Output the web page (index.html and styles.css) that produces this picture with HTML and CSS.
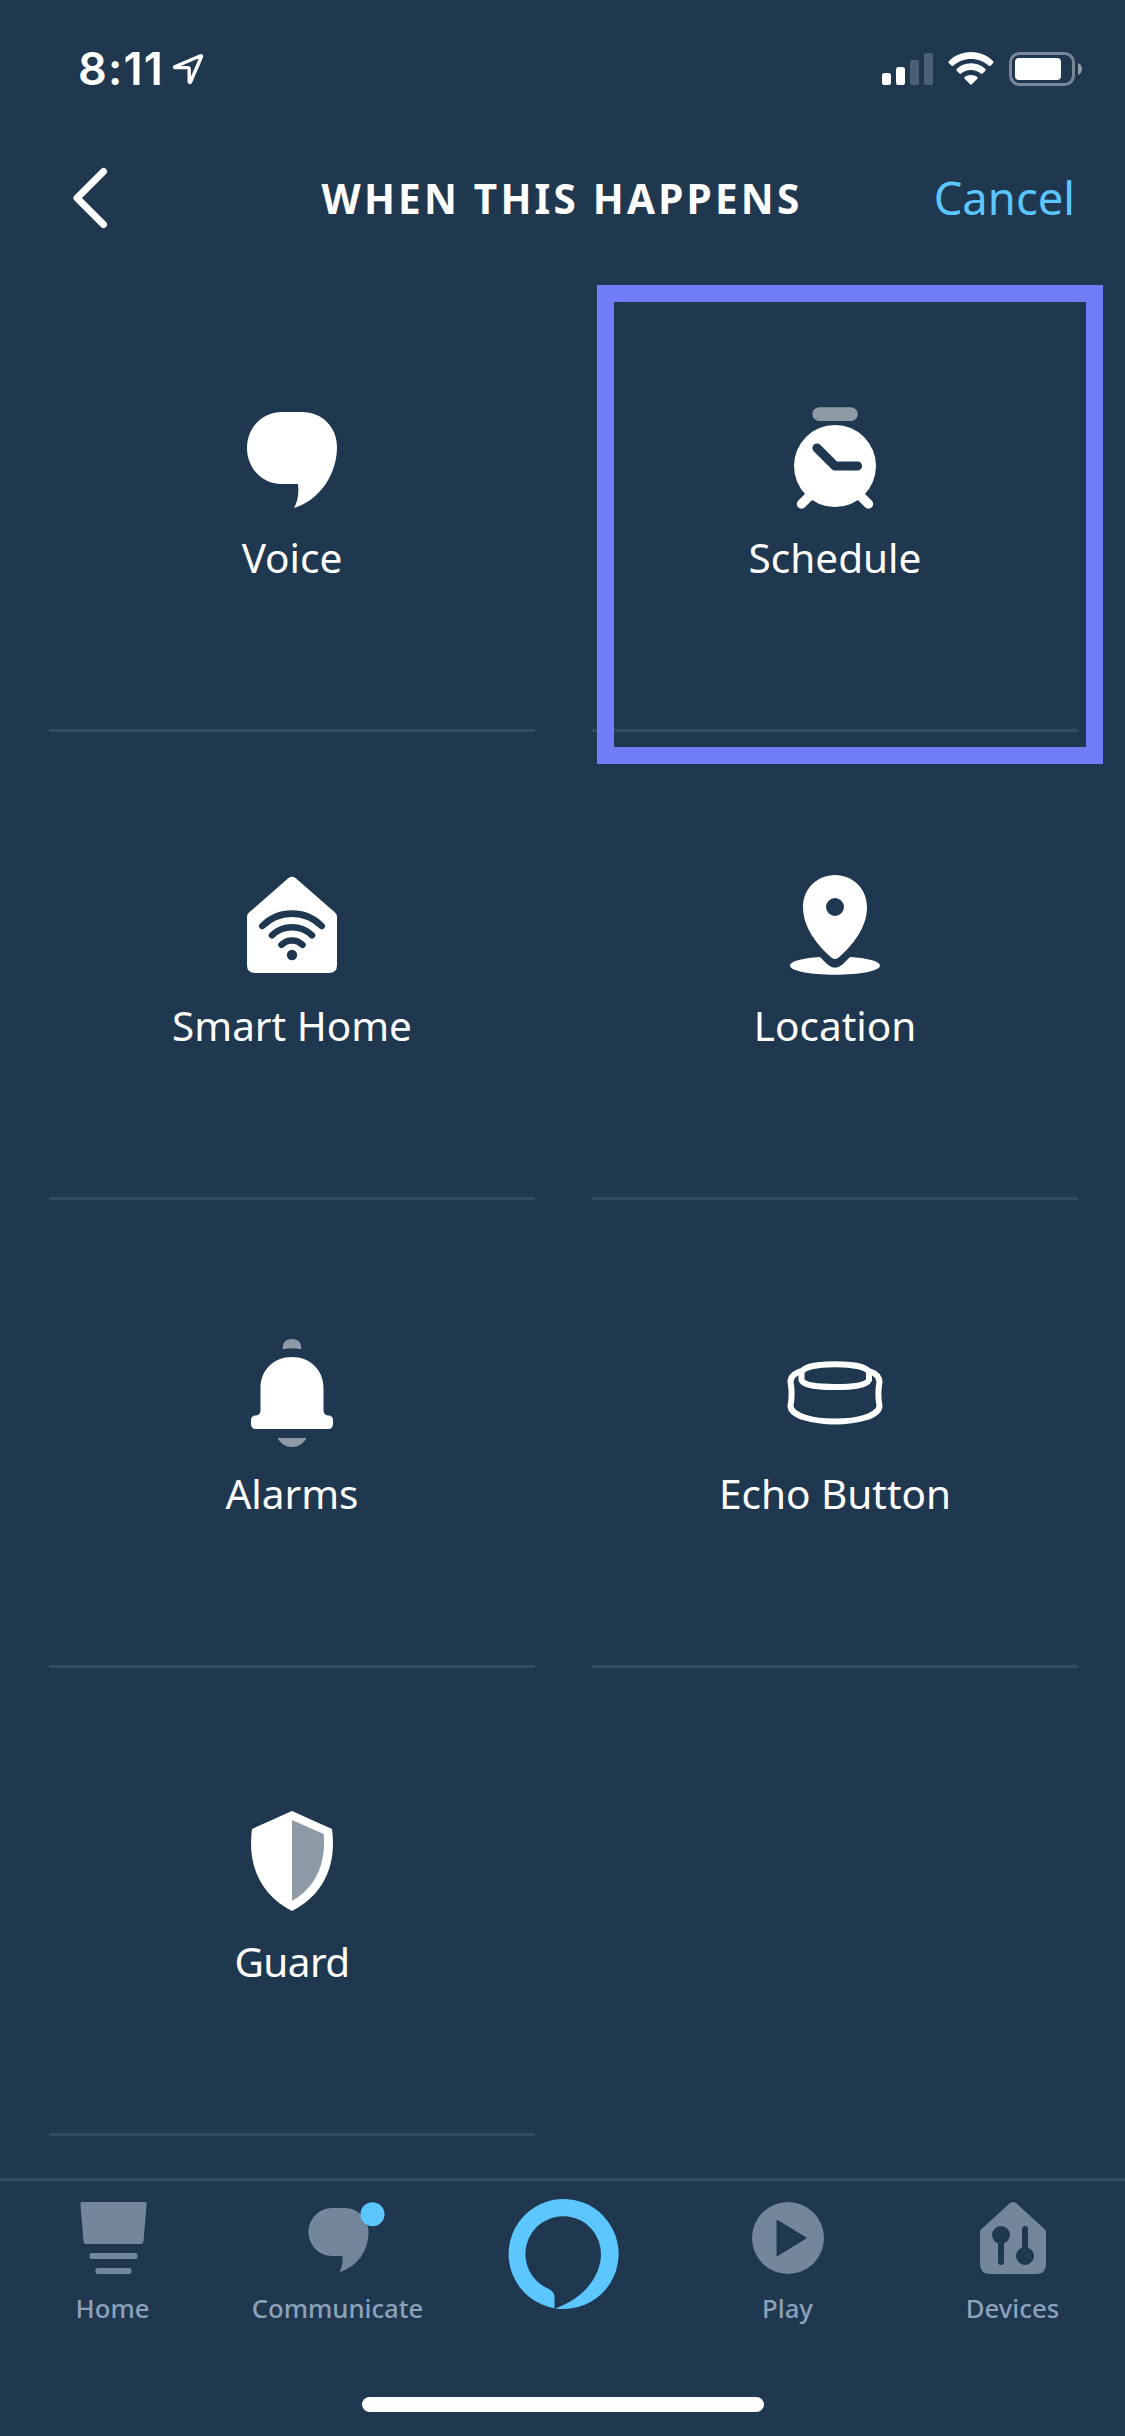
FILE: index.html
```html
<!DOCTYPE html>
<html lang="en">
<head>
<meta charset="utf-8">
<title>When This Happens</title>
<link rel="stylesheet" href="styles.css">
</head>
<body>
<div class="screen">
  <div class="status">
    <div class="status-left">
      <span class="time">8:11</span>
      <svg class="arrow" width="32" height="32" viewBox="0 0 32 32"><path d="M2.8 13.8 28.6 2.8Q29.8 2.4 29.4 3.8L18.4 29.2Q17.4 30 17.2 28.6V15.6Q17 14.6 16 14.6H3.2Q2 14.4 2.8 13.8Z" fill="none" stroke="#fff" stroke-width="3.4" stroke-linejoin="round"/></svg>
    </div>
    <div class="status-right">
      <svg class="signal" width="51" height="33" viewBox="0 0 51 33"><g fill="#fff"><rect y="21" width="9" height="12" rx="2.6"/><rect x="14" y="15" width="9" height="18" rx="2.6"/><g opacity=".2"><rect x="28" y="8" width="9" height="25" rx="2.6"/><rect x="42" y="1" width="9" height="32" rx="2.6"/></g></g></svg>
      <svg class="wifi" width="46" height="34" viewBox="0 0 46 34"><g fill="#fff"><path d="M23 0C31.800 0 39.600 3.500 45.200 9.200Q46 10 45.200 10.900L42.500 13.700Q41.700 14.500 40.800 13.700C36 9.500 29.800 7 23 7S10 9.500 5.200 13.700Q4.300 14.500 3.500 13.700L.8 10.900Q0 10 .8 9.200C6.400 3.500 14.200 0 23 0Z"/><path d="M23 11.200C28.700 11.200 33.700 13.400 37.300 16.900Q38.200 17.800 37.300 18.700L34.500 21.500Q33.700 22.300 32.800 21.500C30.200 19.300 26.800 18 23 18S15.800 19.300 13.200 21.500Q12.300 22.300 11.500 21.500L8.700 18.700Q7.800 17.800 8.700 16.900C12.300 13.400 17.300 11.200 23 11.200Z"/><path d="M23 23C25.600 23 27.700 23.900 29.300 25.100Q30.200 25.900 29.300 26.800L23.900 32.300Q23 33.100 22.100 32.300L16.700 26.800Q15.800 25.900 16.700 25.100C18.300 23.900 20.400 23 23 23Z"/></g></svg>
      <svg class="battery" width="73" height="34" viewBox="0 0 73 34"><rect x="1.500" y="1.500" width="63" height="31" rx="9" fill="none" stroke="#fff" stroke-opacity=".4" stroke-width="3"/><rect x="6" y="6" width="46" height="22" rx="4" fill="#fff"/><path d="M69 11C71.500 12 73 14.200 73 17S71.500 22 69 23Z" fill="#fff" fill-opacity=".5"/></svg>
    </div>
  </div>

  <header class="header">
    <svg class="back" width="36" height="62" viewBox="0 0 36 62"><path d="M31.500 4.500 5 31 31.500 57.500" fill="none" stroke="#fff" stroke-width="7" stroke-linecap="round" stroke-linejoin="round"/></svg>
    <h1 class="title">WHEN THIS HAPPENS</h1>
    <span class="cancel">Cancel</span>
  </header>

  <main class="grid">
    <div class="cell">
      <svg class="icon" viewBox="0 0 108 108"><path d="M44 8H64C84 8 99 23 99 43C99 70 82 96 56 104C60 97 61 89 60 80H44C24 80 9 64 9 44S24 8 44 8Z" fill="#fff"/></svg>
      <span class="label">Voice</span>
    </div>
    <div class="cell">
      <svg class="icon" viewBox="0 0 108 108"><rect x="31.300" y="3.200" width="45.500" height="13.800" rx="6.900" fill="#8e9ba7"/><path d="M29 91.500 20.500 100M79 91.500 87.500 100" stroke="#fff" stroke-width="9.500" stroke-linecap="round"/><circle cx="54" cy="62" r="41" fill="#fff"/><path d="M36 44 54 62H76.500" fill="none" stroke="#1f3850" stroke-width="9.200" stroke-linecap="round" stroke-linejoin="round"/></svg>
      <span class="label">Schedule</span>
      <div class="highlight"></div>
    </div>
    <div class="cell">
      <svg class="icon" viewBox="0 0 108 108"><path d="M50.500 6Q54 3.600 57.500 6L97 40.500Q99 42.500 99 45V93Q99 101 91 101H17Q9 101 9 93V45Q9 42.500 11 40.500Z" fill="#fff"/><g fill="none" stroke="#1f3850" stroke-width="6.600" stroke-linecap="round"><path d="M24.300 54C41 37.500 67 37.500 83.700 54"/><path d="M34 63.300C45 52.500 63 52.500 74 63.300"/><path d="M43.500 72.800C49.500 67 58.500 67 64.500 72.800"/></g><circle cx="54" cy="83" r="5.200" fill="#1f3850"/></svg>
      <span class="label">Smart Home</span>
    </div>
    <div class="cell">
      <svg class="icon" viewBox="0 0 108 108"><path fill-rule="evenodd" d="M54 3C72 3 86 17 86 35C86 56 71 74 57 86Q54 88 51 86C37 74 22 56 22 35C22 17 36 3 54 3ZM54 26A9 9 0 1 0 54 44A9 9 0 1 0 54 26Z" fill="#fff"/><path d="M39 85L46.500 92.500Q54 99 61.500 92.500L69 85C85 86 99 89 99 93.500C99 99 79 102.700 54 102.700S9 99 9 93.500C9 89 23 86 39 85Z" fill="#fff"/></svg>
      <span class="label">Location</span>
    </div>
    <div class="cell">
      <svg class="icon" viewBox="0 0 108 108"><path d="M45 9.300C44 3 48-1 54-1S64 3 63 9.300Q54 7 45 9.300Z" fill="#8e9ba7"/><path d="M22.500 48C22.500 30 36 17 54 17S85.500 30 85.500 48V71Q86 75.500 91 75.500Q95 76 95 80V84Q95 89 90 89H18Q13 89 13 84V80Q13 76 17 75.500Q22 75.500 22.500 71Z" fill="#fff"/><path d="M39.500 98H68.500C65 104 60 107 54 107S43 104 39.500 98Z" fill="#8e9ba7"/></svg>
      <span class="label">Alarms</span>
    </div>
    <div class="cell">
      <svg class="icon" viewBox="0 0 108 108"><g fill="none" stroke="#fff" stroke-width="6" stroke-linejoin="round"><path d="M20.500 33C21 27 36 24.300 54 24.300S87.500 27 88 33V40C85 46 70 47 54 47S23 46 20.500 40Z"/><path d="M20.500 31C14 33 9.500 37 9.500 42C11 50 11 58 9.500 66C10 76 32 81.500 54 81.500S98 76 98.500 66C97 58 97 50 98.500 42C98.500 37 94 33 88 31"/></g></svg>
      <span class="label">Echo Button</span>
    </div>
    <div class="cell">
      <svg class="icon" viewBox="0 0 108 108"><path d="M54 3 94 21C99 58 85 87 54 103C23 87 9 58 14 21Z" fill="#fff"/><path d="M54 12 85.700 26C88 56 78 79 54 93Z" fill="#8e9ba7"/></svg>
      <span class="label label-tight">Guard</span>
    </div>
  </main>

  <footer class="footer">
    <nav class="tabs">
      <div class="tab">
        <svg class="tab-icon" viewBox="0 0 72 72"><g fill="#73869a"><path d="M5 0H68Q69.700 0 69.600 2L66.500 39.500Q66.300 42 64 42H9Q6.700 42 6.500 39.500L3.400 2Q3.300 0 5 0Z"/><rect x="12.500" y="51" width="48" height="6" rx="2.500"/><rect x="18.500" y="66" width="36" height="6" rx="2.500"/></g></svg>
        <span class="tab-label">Home</span>
      </div>
      <div class="tab">
        <svg class="tab-icon" viewBox="0 0 72 72"><path d="M30 6H43C56 6 66.500 17 66.500 30C66.500 49 55 65 37.500 70C40 65 41 60 40.500 54H30C17 54 6.500 43 6.500 30S17 6 30 6Z" fill="#73869a"/><circle cx="70.500" cy="12.300" r="12" fill="#5cc7ff"/></svg>
        <span class="tab-label">Communicate</span>
      </div>
      <div class="tab">
        <svg class="alexa" viewBox="0 0 110 110"><path d="M47.500 109.400A55 55 0 1 1 55 110Q50.500 110 47.500 109.400C77 99 93 76 93 55A37.800 37.800 0 1 0 41 90Q46.500 93 46.500 98V109.300Z" fill="#5cc7ff"/></svg>
      </div>
      <div class="tab">
        <svg class="tab-icon" viewBox="0 0 72 72"><circle cx="36" cy="36" r="36" fill="#73869a"/><path d="M25.500 19 53.500 36 25.500 53Z" fill="#1f3850" stroke="#1f3850" stroke-width="2" stroke-linejoin="round"/></svg>
        <span class="tab-label">Play</span>
      </div>
      <div class="tab">
        <svg class="tab-icon" viewBox="0 0 72 72"><path d="M33 1Q36 -1 39 1L68 27.500Q69 28.500 69 30V62Q69 72 59 72H13Q3 72 3 62V30Q3 28.500 4 27.500Z" fill="#73869a"/><g fill="#1f3850" stroke="#1f3850" stroke-width="6" stroke-linecap="round"><circle cx="24" cy="33" r="6"/><path d="M24 33V60M48 27V54"/><circle cx="48" cy="54" r="6"/></g></svg>
        <span class="tab-label">Devices</span>
      </div>
    </nav>
    <div class="home-indicator"></div>
  </footer>
</div>
</body>
</html>
```
FILE: styles.css
```css
* { box-sizing: border-box; }

body {
  margin: 0;
  background: #1f3850;
  color: #fff;
  font-family: "Noto Sans", sans-serif;
}

.screen {
  width: 1125px;
  height: 2436px;
  overflow: hidden;
  display: flex;
  flex-direction: column;
}

svg { display: block; flex: none; overflow: visible; }

.status {
  height: 133px;
  padding: 0 43px 0 78px;
  display: flex;
  justify-content: space-between;
  align-items: flex-start;
}

.status-left { display: flex; padding-top: 41px; }

.time {
  font: 600 45px/56px "Inter", sans-serif;
  letter-spacing: 1.2px;
  width: 94px;
}

.arrow { margin-top: 12px; }

.status-right { display: flex; padding-top: 52px; }
.wifi { margin-left: 15px; }
.battery { margin-left: 15px; }

.header {
  height: 130px;
  padding: 0 50px 0 72px;
  display: grid;
  grid-template-columns: 200px 1fr 223px;
  align-items: center;
}

.title {
  margin: 1px 0 0;
  text-align: center;
  font-size: 40.500px;
  line-height: 56px;
  font-weight: 700;
  letter-spacing: 3.200px;
  white-space: nowrap;
}

.cancel {
  justify-self: end;
  margin-bottom: 2px;
  color: #5cc7ff;
  font-size: 45.400px;
  line-height: 62px;
}

.grid {
  display: grid;
  grid-template-columns: 486px 486px;
  grid-auto-rows: 468px;
  column-gap: 57px;
  padding: 1px 0 0 49px;
}

.cell {
  position: relative;
  display: flex;
  flex-direction: column;
  align-items: center;
  padding-top: 140px;
  border-bottom: 3px solid #324a62;
}

.icon { width: 108px; height: 108px; }

.label {
  margin-top: 18px;
  font-size: 40.500px;
  line-height: 56px;
  white-space: nowrap;
}

.label-tight { letter-spacing: -0.6px; }

.highlight {
  position: absolute;
  left: 5px;
  top: 21px;
  width: 506px;
  height: 479px;
  border: 17px solid #6f7df7;
}

.footer {
  margin-top: auto;
  height: 258px;
  border-top: 3px solid #324a62;
  display: flex;
  flex-direction: column;
  align-items: center;
}

.tabs {
  width: 100%;
  height: 216px;
  display: grid;
  grid-template-columns: repeat(5, 1fr);
}

.tab {
  display: flex;
  flex-direction: column;
  align-items: center;
  padding-top: 21px;
}

.tab-icon { width: 72px; height: 72px; }

.alexa { width: 110px; height: 110px; margin: -3px 0 0 1px; }

.tab-label {
  margin-top: 17px;
  color: #8ca1ba;
  font-size: 25.700px;
  line-height: 36px;
  font-weight: 500;
}

.home-indicator {
  width: 402px;
  height: 15px;
  border-radius: 8px;
  background: #fdfdfd;
}
```
